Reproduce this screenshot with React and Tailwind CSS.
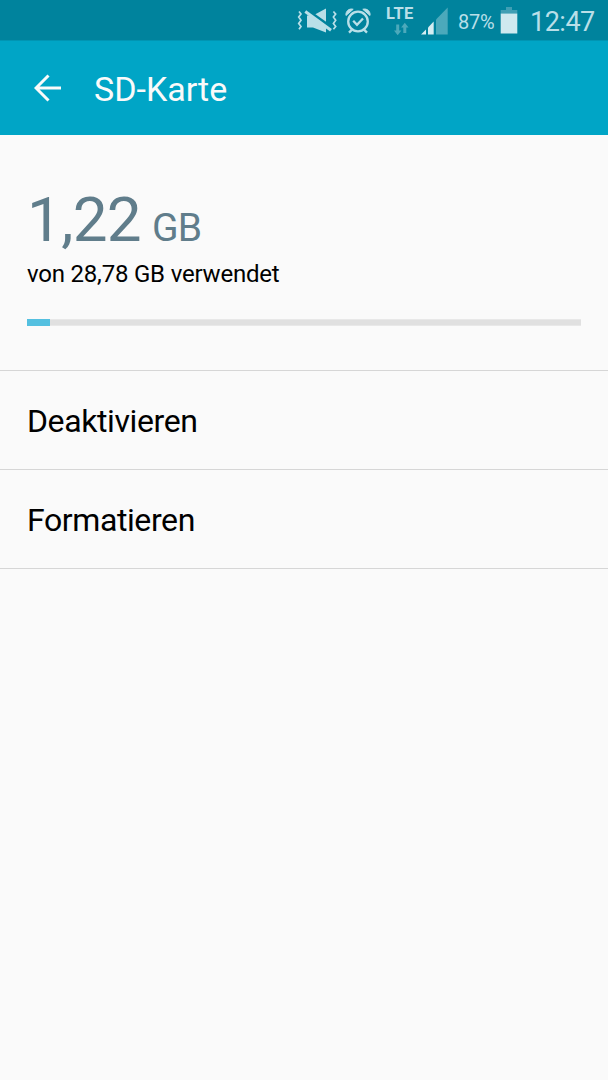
function MuteIcon() {
  return (
    <svg className="h-10 w-[44px] shrink-0" viewBox="296 0 44 40" fill="none">
      <path d="M307 15.5h6L326 8.5V32.5L313 27.5H307Z" fill="#b9dfe8" />
      <path d="M304 8L333 28.5" stroke="#00839d" strokeWidth="3" />
      <path d="M305.3 11.5L331 30.3" stroke="#b9dfe8" strokeWidth="3" />
      <path
        d="M299 11.5l2 2.6-2.3 3 2.3 3.2-2.3 3.2 2.3 3-2 2.8M333.4 11.5l2.3 2.6-2.3 3 2.3 3.2-2.3 3.2 2.3 3-2.3 2.8"
        stroke="#b9dfe8"
        strokeWidth="1.7"
      />
    </svg>
  );
}

function AlarmIcon() {
  return (
    <svg className="h-10 w-[46px] shrink-0" viewBox="340 0 46 40" fill="none" stroke="#b9dfe8">
      <circle cx="358" cy="21.5" r="9.8" strokeWidth="2.3" />
      <path d="M353.2 20.8l3.8 4 6-6.3M352 29.6l-3 3M364 29.6l3 3" strokeWidth="2.3" />
      <path d="M346 15.5a5.5 5.5 0 0 1 7.2-6.2ZM370 15.5a5.5 5.5 0 0 0-7.2-6.2Z" fill="#b9dfe8" strokeWidth="1" />
    </svg>
  );
}

function SignalIcon() {
  return (
    <svg className="h-10 w-[29px] shrink-0" viewBox="419 0 29 40">
      <path d="M421 34.5L426 29.5V34.5Z" fill="#d5edf2" />
      <path d="M428 27.5L433.7 21.5V34.5H428Z" fill="#d5edf2" />
      <path d="M436 19.5L447.7 7.5V34.5H436Z" fill="#4ca9bb" />
    </svg>
  );
}

function BatteryIcon() {
  return (
    <svg className="h-10 w-[18px] shrink-0" viewBox="500 0 18 40">
      <path d="M506 7h6v3h5.3v3.6h-16.6V10h5.3Z" fill="#409fb4" />
      <path d="M500.7 13.5h16.6v20h-16.6Z" fill="#cfe9ef" />
    </svg>
  );
}

function StatusBar() {
  return (
    <div className="flex h-10 bg-[#00839d] pl-[296px] whitespace-nowrap text-[#b9dfe8]">
      <MuteIcon />
      <AlarmIcon />
      <div className="w-[33px] shrink-0">
        <div className="mt-[5px] h-[17px] text-[16.5px] leading-[17px] font-bold tracking-[0.3px]">LTE</div>
        <svg className="ml-2 h-[14px] w-[16px]" viewBox="394 22 16 14" fill="#4ca9bb">
          <path d="M396.2 24.5h3v6h2.2l-3.7 4.8-3.7-4.8h2.2ZM403.3 33v-5.5h-2.2l3.7-4.8 3.7 4.8h-2.2V33Z" />
        </svg>
      </div>
      <SignalIcon />
      <div className="ml-[10px] w-[42px] shrink-0 pt-[2px] text-[20px] leading-10 tracking-[-0.2px]">87%</div>
      <BatteryIcon />
      <div className="ml-[12px] pt-[2px] text-[27px] leading-10 tracking-[-0.5px]">12:47</div>
    </div>
  );
}

function Row({ label }) {
  return (
    <button className="block h-[99px] w-full border-b border-[#d6d6d6] px-[27px] pt-px text-left text-[32px] leading-[98px] tracking-[-0.4px] whitespace-nowrap">
      {label}
    </button>
  );
}

export default function App() {
  return (
    <div className="h-[1080px] w-[608px] overflow-hidden bg-[#fafafa] font-['Roboto',sans-serif] text-black">
      <StatusBar />
      <header className="flex h-[95px] items-center border-t border-[#0095b3] bg-[#00a5c6] pl-[34px] text-[#fafafa]">
        <svg className="h-7 w-7" viewBox="34 74 28 28" fill="none" stroke="#fafafa" strokeWidth="3">
          <path d="M48.5 75.5L36 88L48.5 100.5M36 88H61" />
        </svg>
        <h1 className="ml-8 pt-[2px] text-[34px] leading-10">SD-Karte</h1>
      </header>
      <section className="h-[236px] border-b border-[#d6d6d6] px-[27px] pt-[48px]">
        <div className="h-[73px] text-[62px] leading-[73px] tracking-[-0.7px] whitespace-nowrap text-[#607d8b]">
          1,22<span className="ml-[11px] text-[39px]">GB</span>
        </div>
        <div className="mt-1 text-[24px] leading-7 tracking-[-0.2px]">von 28,78 GB verwendet</div>
        <div className="mt-[31px] h-[7px] border-y border-[#e8e8e8] bg-[#e0e0e0]">
          <div className="-my-px h-[7px] w-[23px] bg-[#54c0e0]" />
        </div>
      </section>
      <Row label="Deaktivieren" />
      <Row label="Formatieren" />
    </div>
  );
}
